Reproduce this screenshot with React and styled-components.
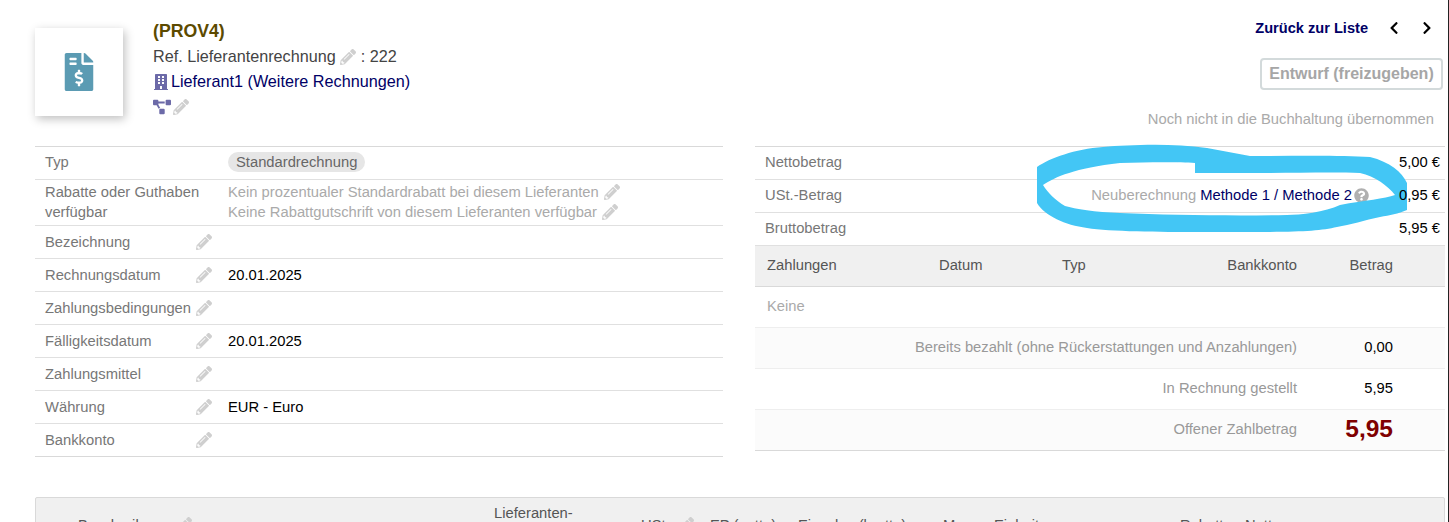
import React from 'react';
import styled, { createGlobalStyle } from 'styled-components';
import {
  FaFileInvoiceDollar,
  FaPencilAlt,
  FaBuilding,
  FaProjectDiagram,
  FaQuestionCircle,
  FaChevronLeft,
  FaChevronRight,
} from 'react-icons/fa';

const GlobalStyle = createGlobalStyle`
  html, body {
    margin: 0;
    height: 522px;
    overflow: hidden;
    background: #fff;
  }
  body {
    font-family: "Liberation Sans", Arial, sans-serif;
    font-size: 14.75px;
    color: #444;
  }
`;

const Page = styled.div`
  position: relative;
  height: 522px;
  overflow: hidden;
  padding: 0 3px 0 35px;
  border-right: 1px solid #222;
  box-sizing: border-box;
`;

const Header = styled.header`
  display: flex;
  justify-content: space-between;
  height: 146px;
`;

const Ident = styled.div`
  display: flex;
  padding-top: 28px;
`;

const LogoCard = styled.div`
  width: 88px;
  height: 88px;
  display: flex;
  align-items: center;
  justify-content: center;
  background: #fff;
  box-shadow: 2px 3px 9px rgba(0, 0, 0, 0.25);
  color: #5b9bb3;
  font-size: 38px;
`;

const Morehtml = styled.div`
  margin: -10px 0 0 30px;
  font-size: 16.2px;
`;

const Title = styled.div`
  font-size: 17.7px;
  font-weight: 700;
  color: #5c4a00;
  height: 26px;
  line-height: 26px;
`;

const Line = styled.div`
  display: flex;
  align-items: center;
  height: 25px;
  white-space: pre;
`;

const Link = styled.span`
  color: #000066;
`;

const Pencil = styled(FaPencilAlt)`
  color: #cfcfcf;
  font-size: 16px;
  flex: none;
`;

const Purple = styled.span`
  display: inline-flex;
  color: #6c6aa8;
  font-size: ${(p) => p.$size || 16}px;
  margin-right: ${(p) => p.$gap || 0}px;
`;

const Actions = styled.div`
  display: flex;
  flex-direction: column;
  align-items: flex-end;
  padding-top: 19px;
`;

const Nav = styled.div`
  display: flex;
  align-items: center;
  gap: 19px;
  height: 18px;
  font-size: 14.6px;
  font-weight: 700;
  color: #000066;
  padding-right: 11px;
  margin-bottom: 21px;
`;

const Arrow = styled.span`
  display: inline-flex;
  color: #000;
  font-size: 14px;
`;

const StatusButton = styled.div`
  box-sizing: border-box;
  width: 183px;
  height: 32px;
  margin-right: 2px;
  display: flex;
  align-items: center;
  justify-content: center;
  border: 2px solid #d3dadb;
  border-radius: 4px;
  font-size: 16px;
  font-weight: 700;
  color: #a6a6a6;
`;

const Accounting = styled.div`
  margin: 20px 11px 0 0;
  color: #aaa;
  line-height: 18px;
`;

const Columns = styled.div`
  display: grid;
  grid-template-columns: 688px 690px;
  column-gap: 32px;
  align-items: start;
`;

const FieldTable = styled.div`
  border-top: 1px solid #d9d9d9;
  border-bottom: 1px solid #d9d9d9;
`;

const FieldRow = styled.div`
  display: grid;
  grid-template-columns: 193px 1fr;
  align-items: center;
  box-sizing: border-box;
  height: ${(p) => p.$height || 33}px;
  padding-bottom: ${(p) => p.$lift || 0}px;
  & + & {
    border-top: 1px solid #e0e0e0;
  }
`;

const FieldLabel = styled.div`
  display: flex;
  align-items: center;
  justify-content: space-between;
  padding: 0 16px 0 10px;
  color: #777;
  line-height: 20px;
  white-space: nowrap;
`;

const FieldValue = styled.div`
  color: ${(p) => (p.$muted ? '#aaa' : '#000')};
  line-height: 20px;
`;

const Hint = styled.div`
  display: flex;
  align-items: center;
  gap: 5px;
`;

const Badge = styled.span`
  display: inline-block;
  padding: 0 8px;
  border-radius: 10px;
  background: #e6e6e6;
  color: #666;
  line-height: 20px;
`;

const AmountBlock = styled.div`
  border-top: 1px solid #d9d9d9;
`;

const AmountRow = styled.div`
  display: flex;
  align-items: center;
  justify-content: space-between;
  height: 33px;
  box-sizing: border-box;
  padding: 0 5px 2px 10px;
  border-bottom: 1px solid #e0e0e0;
  color: #777;
`;

const Recalc = styled.div`
  display: flex;
  align-items: center;
  margin-left: auto;
  margin-right: 30px;
  color: #aaa;
  white-space: pre;
`;

const Help = styled(FaQuestionCircle)`
  color: #b0b0b0;
  font-size: 15px;
  margin-left: 2px;
`;

const Amount = styled.span`
  position: relative;
  z-index: 1;
  color: #000;
`;

const PayHead = styled.div`
  display: grid;
  grid-template-columns: 172px 123px 80px 1fr 96px;
  align-items: center;
  height: 41px;
  box-sizing: border-box;
  padding: 0 52px 2px 12px;
  background: #f0f0f0;
  border-bottom: 1px solid #d9d9d9;
  color: #555;
`;

const RightCell = styled.span`
  text-align: right;
`;

const EmptyRow = styled.div`
  display: flex;
  align-items: center;
  height: 41px;
  box-sizing: border-box;
  padding: 0 0 2px 12px;
  border-bottom: 1px solid #eee;
  color: #aaa;
`;

const SumRow = styled.div`
  display: grid;
  grid-template-columns: 1fr 96px;
  align-items: center;
  height: 41px;
  box-sizing: border-box;
  padding: 0 52px 2px 0;
  border-bottom: 1px solid ${(p) => (p.$last ? '#d9d9d9' : '#eee')};
  background: ${(p) => (p.$alt ? '#fbfbfb' : '#fff')};
  color: #999;
  text-align: right;
`;

const SumValue = styled.span`
  color: #000;
`;

const Due = styled.span`
  color: #7f0000;
  font-size: 24.5px;
  font-weight: 700;
`;

const Lines = styled.div`
  height: 80px;
  margin-top: 40px;
  background: #f0f0f0;
  border: 1px solid #d9d9d9;
  border-radius: 2px 2px 0 0;
  box-sizing: border-box;
  color: #555;
  display: grid;
  grid-template-columns: 42px 416px 147px 69px 88px 145px 51px 186px 65px 1fr;
  align-items: start;
  padding-top: 5px;
  line-height: 20px;
`;

const HeadCell = styled.div`
  display: flex;
  align-items: center;
  gap: ${(p) => (p.$gap ? 8 : 0)}px;
  height: 40px;
  box-sizing: border-box;
  padding-top: ${(p) => (p.$double ? 0 : 4)}px;
  white-space: pre;
`;

const Scribble = styled.svg`
  position: absolute;
  left: 0;
  top: 0;
  pointer-events: none;
`;

const fields = [
  ['Bezeichnung', ''],
  ['Rechnungsdatum', '20.01.2025'],
  ['Zahlungsbedingungen', ''],
  ['Fälligkeitsdatum', '20.01.2025'],
  ['Zahlungsmittel', ''],
  ['Währung', 'EUR - Euro'],
  ['Bankkonto', ''],
];

export default function App() {
  return (
    <>
      <GlobalStyle />
      <Page>
        <Header>
          <Ident>
            <LogoCard>
              <FaFileInvoiceDollar />
            </LogoCard>
            <Morehtml>
              <Title>(PROV4)</Title>
              <Line>
                Ref. Lieferantenrechnung <Pencil /> : 222
              </Line>
              <Line>
                <Purple $gap={2}><FaBuilding /></Purple>
                <Link>Lieferant1 (Weitere Rechnungen)</Link>
              </Line>
              <Line>
                <Purple $size={18} $gap={2}><FaProjectDiagram /></Purple>
                <Pencil />
              </Line>
            </Morehtml>
          </Ident>
          <Actions>
            <Nav>
              Zurück zur Liste
              <Arrow><FaChevronLeft /></Arrow>
              <Arrow><FaChevronRight /></Arrow>
            </Nav>
            <StatusButton>Entwurf (freizugeben)</StatusButton>
            <Accounting>Noch nicht in die Buchhaltung übernommen</Accounting>
          </Actions>
        </Header>

        <Columns>
          <FieldTable>
            <FieldRow $height={32} $lift={2}>
              <FieldLabel>Typ</FieldLabel>
              <FieldValue><Badge>Standardrechnung</Badge></FieldValue>
            </FieldRow>
            <FieldRow $height={46} $lift={1}>
              <FieldLabel>Rabatte oder Guthaben<br />verfügbar</FieldLabel>
              <FieldValue $muted>
                <Hint>Kein prozentualer Standardrabatt bei diesem Lieferanten <Pencil /></Hint>
                <Hint>Keine Rabattgutschrift von diesem Lieferanten verfügbar <Pencil /></Hint>
              </FieldValue>
            </FieldRow>
            {fields.map(([label, value]) => (
              <FieldRow key={label}>
                <FieldLabel>{label}<Pencil /></FieldLabel>
                <FieldValue>{value}</FieldValue>
              </FieldRow>
            ))}
          </FieldTable>

          <div>
            <AmountBlock>
              <AmountRow>Nettobetrag<Amount>5,00 €</Amount></AmountRow>
              <AmountRow>
                USt.-Betrag
                <Recalc>
                  Neuberechnung <Link>Methode 1 / Methode 2</Link><Help />
                </Recalc>
                <Amount>0,95 €</Amount>
              </AmountRow>
              <AmountRow>Bruttobetrag<Amount>5,95 €</Amount></AmountRow>
            </AmountBlock>
            <PayHead>
              <span>Zahlungen</span>
              <span>Datum</span>
              <span>Typ</span>
              <RightCell>Bankkonto</RightCell>
              <RightCell>Betrag</RightCell>
            </PayHead>
            <EmptyRow>Keine</EmptyRow>
            <SumRow $alt>
              <span>Bereits bezahlt (ohne Rückerstattungen und Anzahlungen)</span>
              <SumValue>0,00</SumValue>
            </SumRow>
            <SumRow>
              <span>In Rechnung gestellt</span>
              <SumValue>5,95</SumValue>
            </SumRow>
            <SumRow $alt $last>
              <span>Offener Zahlbetrag</span>
              <Due>5,95</Due>
            </SumRow>
          </div>
        </Columns>

        <Lines>
          <span />
          <HeadCell $gap>Beschreibung<Pencil /></HeadCell>
          <HeadCell $double>Lieferanten-{'\n'}Ref.</HeadCell>
          <HeadCell $gap>USt.<Pencil /></HeadCell>
          <HeadCell>EP (netto)</HeadCell>
          <HeadCell>Einzelpr. (brutto)</HeadCell>
          <HeadCell>Menge</HeadCell>
          <HeadCell>Einheit</HeadCell>
          <HeadCell>Rabatt</HeadCell>
          <HeadCell>Netto</HeadCell>
        </Lines>

        <Scribble width="1449" height="522" viewBox="0 0 1449 522">
          <path
            fill="#43c6f5"
            fillRule="evenodd"
            d="M1037 167 C1050 158 1075 149 1103 147 C1130 145 1170 143 1207 148 L1250 156 C1290 156 1340 155 1370 157 C1390 162 1402 172 1407 183 L1407 210 C1398 214 1390 215 1380 217 C1365 220 1350 225 1337 227 C1320 231 1300 232 1250 232 C1200 232 1120 233 1087 228 C1065 225 1045 216 1037 203 Z M1043 185 C1055 177 1075 168 1120 163 C1150 162 1180 162 1195 163 L1195 173 L1252 173 C1290 173 1335 172 1360 173 C1375 176 1388 186 1395 195 C1385 199 1365 200 1340 205 C1325 212 1300 215 1287 215 C1230 216 1170 215 1120 213 C1095 212 1075 209 1065 206 C1055 200 1048 193 1043 185 Z"
          />
        </Scribble>
      </Page>
    </>
  );
}
